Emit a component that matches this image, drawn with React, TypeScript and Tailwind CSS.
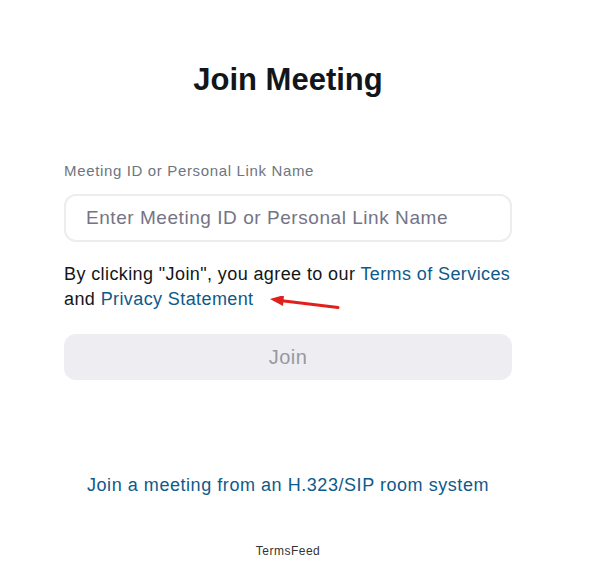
export default function App() {
  return (
    <div className="min-h-[567px] w-full bg-white font-['Liberation_Sans',Arial,sans-serif]">
      <div className="ml-[64px] flex w-[448px] flex-col pt-[62px]">
        <h1 className="text-center text-[31px] font-bold leading-[36px] text-[#131619]">Join Meeting</h1>

        <label className="mt-[65px] text-[15px] leading-[16px] tracking-[0.65px] text-[#6e7680]">
          Meeting ID or Personal Link Name
        </label>
        <input
          type="text"
          placeholder="Enter Meeting ID or Personal Link Name"
          className="mt-[15px] h-[48px] w-full rounded-[12px] border-2 border-[#ededf0] px-[20px] text-[19px] tracking-[0.55px] text-[#222] outline-none placeholder:text-[#747487]"
        />

        <div className="relative mt-[20px] text-[18px] leading-[25px] tracking-[0.4px] text-[#131619]">
          <p>
            By clicking "Join", you agree to our <a className="text-[#0e5a8a]">Terms of Services</a>
            <br />
            and <a className="text-[#0e5a8a]">Privacy Statement</a>
          </p>
          <svg className="absolute left-[204px] top-[34px]" width="74" height="14" viewBox="0 0 74 14">
            <line x1="12" y1="4.5" x2="70" y2="11.5" stroke="#e0201c" strokeWidth="3" strokeLinecap="round" />
            <polygon points="2,3 16,-1 15,10" fill="#e0201c" />
          </svg>
        </div>

        <button className="mt-[22px] h-[46px] w-full rounded-[12px] bg-[#ededf2] text-[20px] tracking-[0.5px] text-[#98989f]">
          Join
        </button>

        <a className="mt-[94px] text-center text-[18px] leading-[22px] tracking-[0.55px] text-[#0e5a8a]">
          Join a meeting from an H.323/SIP room system
        </a>

        <p className="mt-[48px] text-center text-[12px] leading-[14px] tracking-[0.5px] text-[#333]">TermsFeed</p>
      </div>
    </div>
  );
}
